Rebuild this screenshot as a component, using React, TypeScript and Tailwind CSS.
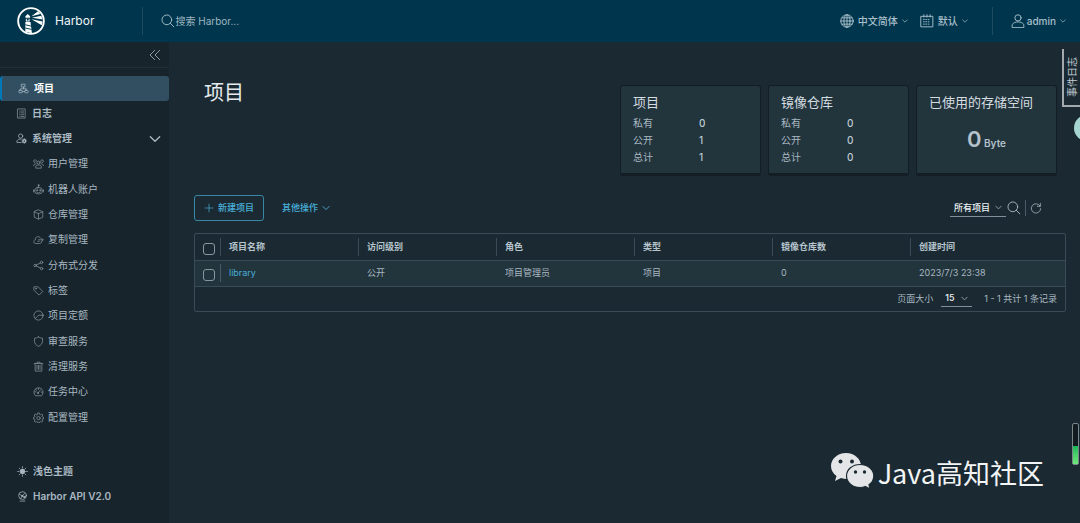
import React from 'react';

type IconProps = { className?: string; children?: React.ReactNode };

const Icon: React.FC<IconProps> = ({ className = 'size-3', children }) => (
  <svg
    viewBox="0 0 36 36"
    fill="none"
    stroke="currentColor"
    strokeWidth={2.4}
    strokeLinecap="round"
    strokeLinejoin="round"
    aria-hidden="true"
    className={`${className} shrink-0`}
  >
    {children}
  </svg>
);

const Chevron: React.FC<{ className?: string }> = ({ className = 'size-2' }) => (
  <Icon className={className}>
    <path d="M4 11l14 14 14-14" strokeWidth={4} />
  </Icon>
);

const SearchIcon = ({ className = 'size-4' }) => (
  <Icon className={className}>
    <circle cx="15" cy="15" r="12.500" />
    <path d="M24 24l9 9" />
  </Icon>
);

const icons = {
  projects: (
    <>
      <rect x="12" y="4" width="11" height="9" />
      <rect x="3" y="24" width="11" height="8" rx="2" />
      <rect x="22" y="24" width="11" height="8" rx="2" />
      <path d="M18 13v6M8 24v-5h19v5M14 28h8" />
    </>
  ),
  logs: (
    <>
      <rect x="6" y="3" width="24" height="30" />
      <path d="M12 10h2M12 16h2M12 22h2M12 28h2M18 10h7M18 16h7M18 22h7M18 28h7" />
    </>
  ),
  admin: (
    <>
      <circle cx="15" cy="10" r="7" />
      <path d="M17 31H3v-5c3-5 8-7 14-6" />
      <circle cx="27" cy="26" r="4.500" strokeWidth={4} />
      <path d="M27 18v3M27 31v3M19 26h3M32 26h3M21.500 20.500l2 2M30.500 29.500l2 2M32.500 20.500l-2 2M23.500 29.500l-2 2" />
    </>
  ),
  users: (
    <>
      <circle cx="18" cy="15" r="5" />
      <path d="M9 32v-5c5-6 13-6 18 0v5z" />
      <path d="M11 11a4.500 4.500 0 1 0-5 4M25 11a4.500 4.500 0 1 1 5 4M2 25c0-4 3-6 8-6M34 25c0-4-3-6-8-6" />
    </>
  ),
  robot: (
    <>
      <rect x="6" y="12" width="24" height="20" rx="8" />
      <path d="M18 12V6M2 19v7M34 19v7M12 26c4 3 8 3 12 0M2 22h4M30 22h4" />
      <circle cx="18" cy="4" r="2" />
      <circle cx="13" cy="20" r="1.500" fill="currentColor" />
      <circle cx="23" cy="20" r="1.500" fill="currentColor" />
    </>
  ),
  box: (
    <>
      <path d="M18 3l14 6v18l-14 6-14-6V9z" />
      <path d="M4 9l14 6 14-6M18 15v18" />
    </>
  ),
  replicate: (
    <>
      <path d="M29 25c-1 4-4 6-8 6H9c-9 0-8-11-1-12C7 7 20 5 24 13" />
      <path d="M18 19h15M28 14l5 5-5 5M20 24h-4" />
    </>
  ),
  share: (
    <>
      <circle cx="7" cy="18" r="4" />
      <circle cx="28" cy="8" r="4" />
      <circle cx="28" cy="28" r="4" />
      <path d="M11 16l13-6M11 20l13 6" />
    </>
  ),
  tag: (
    <>
      <path d="M4 6h13l15 15-12 12L4 18z" />
      <circle cx="10" cy="12" r="1.500" />
    </>
  ),
  quota: (
    <>
      <circle cx="18" cy="18" r="15" />
      <path d="M33 17H19L7 28" />
    </>
  ),
  shield: <path d="M18 3c4 3 8 4 13 4v10c0 8-5 13-13 17C10 30 5 25 5 17V7c5 0 9-1 13-4z" />,
  trash: <path d="M4 8h28M13 8V4h10v4M7 8v25h22V8M13 14v13M18 14v13M23 14v13" />,
  gauge: (
    <>
      <path d="M7 31C-2 20 5 6 18 6s20 14 11 25z" />
      <path d="M16 23l9-10M18 7v4M6 19h4M27 20h4M9 12l3 2" />
      <circle cx="16" cy="23" r="2" />
    </>
  ),
  cog: (
    <>
      <path d="M14.500 7.500L15.500 3h5l1 4.500 3 1.500 4-2.500 3.500 3.500L29.500 14l1 2.500 4 1v5l-4 1-1 2.500 2.500 4-3.500 3.500-4-2.500-3 1.500-1 3.500h-5l-1-3.500-3-1.500-4 2.500L4 30l2.500-4-1-2.500-4-1v-5l4-1 1-2.500L4 10l3.500-3.500 4 2.500z" />
      <circle cx="18" cy="20" r="5.500" />
    </>
  ),
  sun: (
    <>
      <circle cx="18" cy="18" r="8" fill="currentColor" />
      <path d="M18 2v4M18 30v4M2 18h4M30 18h4M7 7l3 3M26 26l3 3M29 7l-3 3M10 26l-3 3" />
    </>
  ),
  api: (
    <>
      <circle cx="18" cy="15" r="12.500" />
      <path d="M7 10l10 6 8-8M17 16l7 5 5-5M17 16l-5 9M10 33h16" />
      <circle cx="17" cy="16" r="2" fill="currentColor" />
      <circle cx="24" cy="20" r="2" fill="currentColor" />
    </>
  ),
};

type IconName = keyof typeof icons;

const adminLinks: { name: string; icon: IconName }[] = [
  { name: '用户管理', icon: 'users' },
  { name: '机器人账户', icon: 'robot' },
  { name: '仓库管理', icon: 'box' },
  { name: '复制管理', icon: 'replicate' },
  { name: '分布式分发', icon: 'share' },
  { name: '标签', icon: 'tag' },
  { name: '项目定额', icon: 'quota' },
  { name: '审查服务', icon: 'shield' },
  { name: '清理服务', icon: 'trash' },
  { name: '任务中心', icon: 'gauge' },
  { name: '配置管理', icon: 'cog' },
];

const stats = [
  { title: '项目', rows: [['私有', 0], ['公开', 1], ['总计', 1]] },
  { title: '镜像仓库', rows: [['私有', 0], ['公开', 0], ['总计', 0]] },
];

const columns = ['项目名称', '访问级别', '角色', '类型', '镜像仓库数', '创建时间'];
const cells = ['公开', '项目管理员', '项目', '0', '2023/7/3 23:38'];

const HarborLogo = () => (
  <svg viewBox="0 0 60 60" className="size-7 shrink-0" aria-hidden="true">
    <circle cx="30" cy="30" r="27.500" fill="none" stroke="#fff" strokeWidth="4" />
    <path d="M18 20l5-5 5 5v3H18zM19 25h8v6h-8z" fill="#fff" />
    <path d="M18 32h11l3 24-14-3z" fill="#fff" />
    <path d="M18 38l12 3M18 45l13 3" stroke="#00364d" strokeWidth="2" />
    <path d="M21 25h4v4h-4z" fill="#00364d" />
    <path d="M31 20L45 9l5 6zM32 23l20-4 3 8zM31 26l24 5-2 8z" fill="#fff" />
  </svg>
);

const Header = () => (
  <header className="flex h-[42px] shrink-0 items-center bg-[#00364d] text-[#a9bfca]">
    <a href="#" className="flex items-center gap-[10px] pl-[17px] text-[12px] text-[#f0f5f7]">
      <HarborLogo />
      Harbor
    </a>
    <label className="ml-12 flex h-7 flex-1 items-center border-l border-[#1c4a5f] pl-[18px]">
      <SearchIcon className="size-[14px]" />
      <input
        type="text"
        aria-label="搜索"
        placeholder="搜索 Harbor..."
        className="w-full bg-transparent text-[10px] outline-none placeholder:text-[#9fb5c0]"
      />
    </label>
    <div className="flex items-center gap-3 pr-6 text-[10px] font-medium">
      <button className="flex items-center gap-1">
        <Icon className="size-[14px]">
          <circle cx="18" cy="18" r="16" />
          <ellipse cx="18" cy="18" rx="8" ry="16" />
          <path d="M18 2v32M2 18h32M5 10h26M5 26h26" />
        </Icon>
        中文简体
        <Chevron className="size-[6px]" />
      </button>
      <button className="flex items-center gap-1">
        <Icon className="size-[14px]">
          <path d="M3 6h30v27H3zM10 2v6M18 2v6M26 2v6" />
          <path d="M9 14h18M9 20h18M9 26h18" strokeDasharray="2 4" />
        </Icon>
        默认
        <Chevron className="size-[6px]" />
      </button>
    </div>
    <div className="flex h-7 items-center border-l border-[#1c4a5f] pr-[14px] pl-[18px] text-[10px] font-medium">
      <button className="flex items-center gap-[2px]">
        <Icon className="size-[14px]">
          <circle cx="18" cy="10" r="8" />
          <path d="M3 34v-7c7-9 23-9 30 0v7z" />
        </Icon>
        admin
        <Chevron className="ml-[2px] size-[6px]" />
      </button>
    </div>
  </header>
);

const Sidebar = () => (
  <aside className="flex w-[169px] shrink-0 flex-col bg-[#17242b] pb-[14px] text-[10px] text-[#a9b8c2]">
    <div className="flex h-[26px] items-center justify-end border-b border-[#202e36] pr-2">
      <button aria-label="收起">
        <Icon>
          <path d="M17 4L3 18l14 14M32 4L18 18l14 14" />
        </Icon>
      </button>
    </div>
    <nav className="pt-2">
      <a
        href="#"
        className="flex h-[25px] items-center gap-[5px] rounded-[3px] border-l-2 border-[#0079b8] bg-[#324f62] pl-4 font-bold text-white"
      >
        <Icon className="size-[11px] text-[#a9bac5]">{icons.projects}</Icon>
        项目
      </a>
      <a href="#" className="flex h-[25px] items-center gap-[5px] pl-4 font-bold">
        <Icon className="size-[11px] text-[#8797a1]">{icons.logs}</Icon>
        日志
      </a>
      <button className="flex h-[25px] w-full items-center gap-[5px] pr-2 pl-4 font-bold">
        <Icon className="size-[11px]">{icons.admin}</Icon>
        系统管理
        <Chevron className="ml-auto size-3" />
      </button>
      <ul className="grid h-[279px] auto-rows-fr">
        {adminLinks.map((link) => (
          <li key={link.name}>
            <a href="#" className="flex h-full items-center gap-1 pl-[33px]">
              <Icon className="size-[11px] text-[#8797a1]">{icons[link.icon]}</Icon>
              {link.name}
            </a>
          </li>
        ))}
      </ul>
    </nav>
    <div className="mt-auto font-bold">
      <button className="flex h-[25px] items-center gap-[5px] pl-[17px]">
        <Icon className="size-[11px]">{icons.sun}</Icon>
        浅色主题
      </button>
      <a href="#" className="flex h-[25px] items-center gap-[5px] pl-[17px] font-semibold">
        <Icon className="size-[11px]">{icons.api}</Icon>
        Harbor API V2.0
      </a>
    </div>
  </aside>
);

const cardClass = 'h-[91px] w-[141px] rounded-[3px] border border-b-[3px] border-[#131e24] bg-[#22343c] px-3';

const Summary = () => (
  <div className="flex gap-[7px]">
    {stats.map((card) => (
      <section key={card.title} className={cardClass}>
        <h2 className="pt-[7px] text-[13px] leading-[18px] text-[#d5dde1]">{card.title}</h2>
        <dl className="pt-1 text-[10px] leading-[17px]">
          {card.rows.map(([label, value]) => (
            <div key={label} className="flex">
              <dt className="w-[66px]">{label}</dt>
              <dd className="font-medium text-[#bccad2]">{value}</dd>
            </div>
          ))}
        </dl>
      </section>
    ))}
    <section className={cardClass}>
      <h2 className="pt-[7px] text-[13px] leading-[18px] whitespace-nowrap text-[#d5dde1]">已使用的存储空间</h2>
      <p className="pt-3 text-center text-[10px] leading-8 font-semibold text-[#b4c2cc]">
        <span className="text-[22px]">0</span> Byte
      </p>
    </section>
  </div>
);

const Toolbar = () => (
  <div className="mt-[19px] flex h-[26px] items-center text-[9px] text-[#49afd9]">
    <button className="flex h-full items-center gap-1 rounded-[3px] border border-[#3a87a5] px-[9px] font-medium">
      <Icon className="size-[10px]">
        <path d="M18 4v28M4 18h28" />
      </Icon>
      新建项目
    </button>
    <button className="ml-[18px] flex items-center gap-1 font-medium">
      其他操作
      <Chevron />
    </button>
    <div className="ml-auto flex items-center pr-6 text-[#a9b8c2]">
      <label className="relative mr-px flex items-center border-b border-[#7d909c]">
        <select
          aria-label="项目筛选"
          className="h-[17px] w-14 appearance-none bg-transparent pl-1 font-medium text-[#eaf0f3] outline-none"
        >
          <option>所有项目</option>
        </select>
        <Chevron className="pointer-events-none absolute right-1 size-[7px]" />
      </label>
      <button aria-label="搜索" className="pr-1">
        <SearchIcon className="size-[14px]" />
      </button>
      <button aria-label="刷新" className="border-l border-[#4a5c66] py-[2px] pl-1">
        <Icon className="size-3">
          <path d="M30 12A14 14 0 1 0 32 20M31 4v9h-9" />
        </Icon>
      </button>
    </div>
  </div>
);

const checkboxClass =
  'block size-3 appearance-none rounded-[3px] border border-[#8797a1] bg-transparent checked:bg-[#49afd9]';

const ProjectTable = () => (
  <div className="mt-3 rounded-[2px] border border-[#3a4b55] text-[9px]">
    <table className="w-full table-fixed text-left">
      <thead>
        <tr className="h-[26px]">
          <th className="w-[25px] pt-1 pl-2">
            <input type="checkbox" aria-label="全选" className={checkboxClass} />
          </th>
          {columns.map((name) => (
            <th key={name} className="w-[138px] p-0 font-bold text-[#b6c4cd] last:w-auto">
              <div className="h-[18px] border-l border-[#3a4b55] pl-2 leading-[17px]">{name}</div>
            </th>
          ))}
        </tr>
      </thead>
      <tbody>
        <tr className="h-[26px] border-y border-[#3a4b55] bg-[#22343c]">
          <td className="pt-1 pl-2">
            <input type="checkbox" aria-label="library" className={checkboxClass} />
          </td>
          <td className="p-0">
            <div className="h-[18px] border-l border-[#4a5c66] pl-2 leading-[17px]">
              <a href="#" className="text-[9px] text-[#49afd9]">library</a>
            </div>
          </td>
          {cells.map((cell, i) => (
            <td key={i} className="p-0 pl-[9px]">{cell}</td>
          ))}
        </tr>
      </tbody>
    </table>
    <div className="flex h-6 items-center justify-end pr-2">
      <label htmlFor="page-size">页面大小</label>
      <div className="relative mr-3 ml-2 flex items-center border-b border-[#7d909c]">
        <select
          id="page-size"
          className="h-4 w-[31px] appearance-none bg-transparent pl-1 font-medium text-[#eaf0f3] outline-none"
        >
          <option>15</option>
        </select>
        <Chevron className="pointer-events-none absolute right-1 size-[7px]" />
      </div>
      <span>1 - 1 共计 1 条记录</span>
    </div>
  </div>
);

const Watermark = () => (
  <div className="absolute right-9 bottom-[29px] flex items-center gap-1 font-['Noto_Sans_CJK_SC',sans-serif] text-[27px] leading-10 text-[#f2f4f5]">
    <svg viewBox="0 0 44 38" className="mb-1 h-[38px] w-11" aria-hidden="true">
      <path d="M16 1C7.500 1 1 7 1 14c0 4 2 7.500 5.500 10L5 29l6-3c2 .6 4 1 6 1 9 0 14-6 14-13S24.500 1 16 1z" fill="#e3e5e7" />
      <path d="M30 12.500c-7.500 0-13.500 5-13.500 11.500S22.500 35.500 30 35.500c2 0 3.700-.3 5.300-1l4.700 2.500-1-4.300c3-2 4.800-5 4.800-8.700 0-6.500-6-11.500-13.800-11.500z" fill="#e3e5e7" stroke="#1b2a32" strokeWidth="1.200" />
      <g fill="#1b2a32">
        <circle cx="10.500" cy="9.500" r="2" />
        <circle cx="22" cy="9.500" r="2" />
        <circle cx="25.500" cy="20" r="1.700" />
        <circle cx="34.500" cy="20" r="1.700" />
      </g>
    </svg>
    Java高知社区
  </div>
);

const App: React.FC = () => (
  <div className="relative flex min-h-screen flex-col overflow-hidden bg-[#1b2a32] font-['Inter','Noto_Sans_CJK_SC',sans-serif] text-[#a9b8c2]">
    <Header />
    <div className="flex flex-1">
      <Sidebar />
      <main className="min-w-0 flex-1 pt-[43px] pr-[14px] pl-[25px]">
        <div className="flex justify-between pr-[9px] pl-[10px]">
          <h1 className="-mt-2 text-[20px] leading-8 text-[#e4eaed]">项目</h1>
          <Summary />
        </div>
        <Toolbar />
        <ProjectTable />
      </main>
    </div>

    {/* Panels pinned to the right edge */}
    <button className="absolute top-[49px] right-0 flex h-[58px] w-[18px] items-center justify-center border-b-2 border-l-2 border-[#a3a9ac] bg-[#1b2a32] text-[10px] text-[#c3ced4]">
      <span className="rotate-180 [text-orientation:sideways] [writing-mode:vertical-rl]">事件日志</span>
    </button>
    <div className="absolute top-[115px] -right-5 size-[26px] rounded-full bg-[#a5d5d0]" />
    <div className="absolute right-px bottom-[58px] flex h-[42px] w-[7px] items-end rounded-[2px] border border-[#7b868b] bg-[#121b20]">
      <div className="h-[18px] w-full bg-linear-to-b from-[#14b85a] to-[#6fe87a]" />
    </div>
    <Watermark />
  </div>
);

export default App;
